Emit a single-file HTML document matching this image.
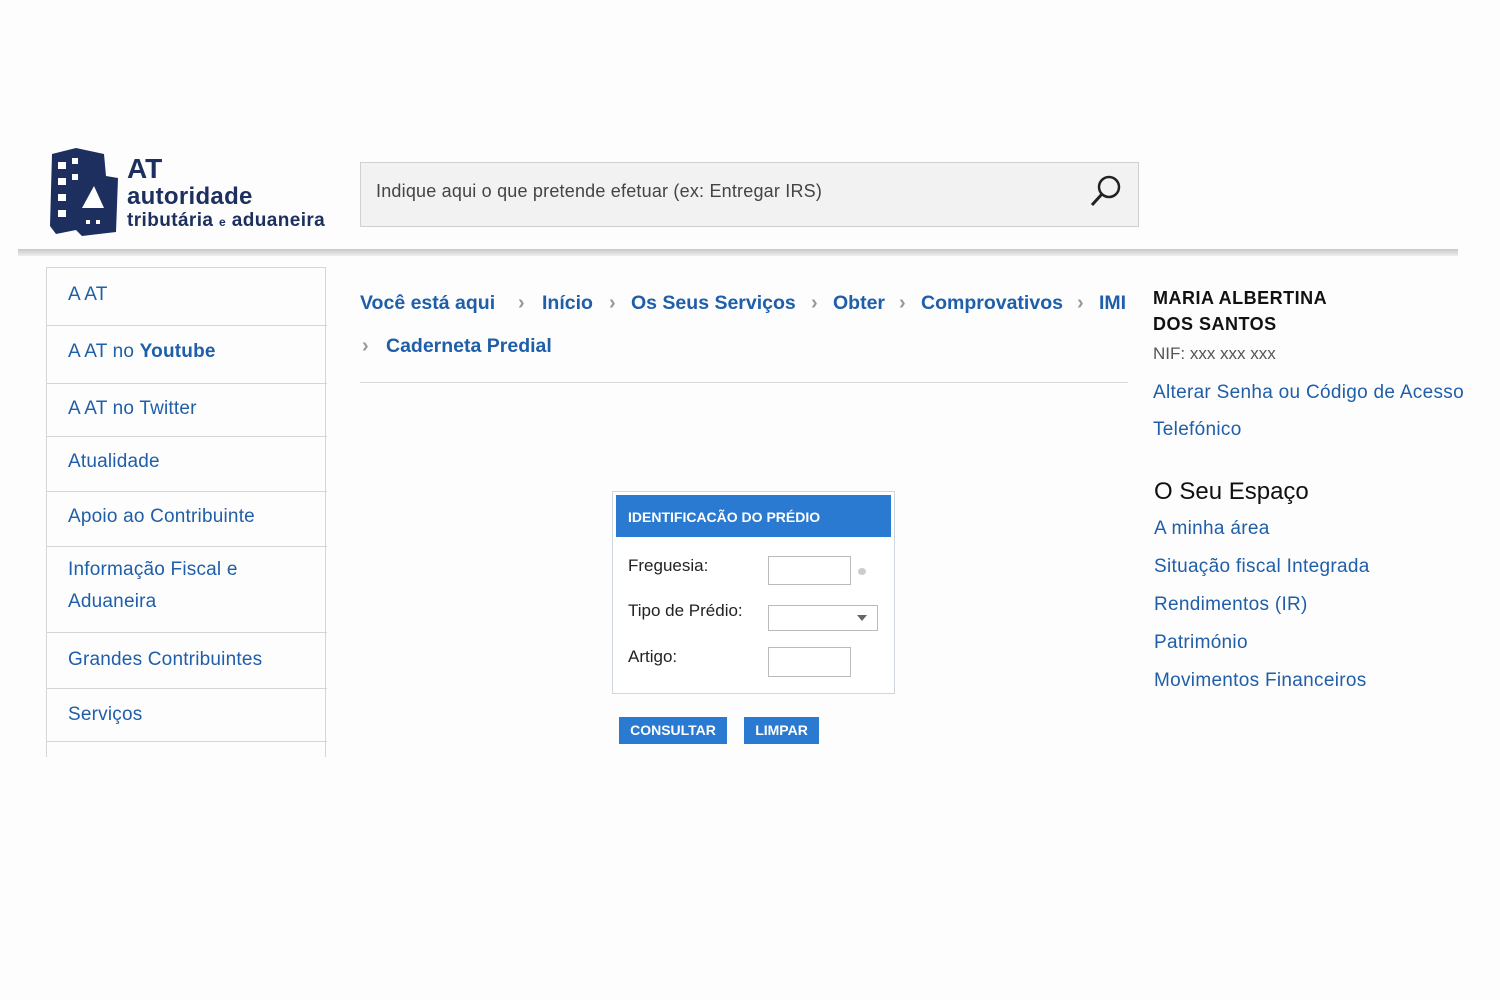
<!DOCTYPE html>
<html><head><meta charset="utf-8"><style>
*{margin:0;padding:0;box-sizing:border-box}
body{width:1500px;height:1000px;background:#fdfdfe;font-family:"Liberation Sans",sans-serif;position:relative;overflow:hidden}
.a{position:absolute}
.nav div{position:absolute;left:0;width:280px;border-bottom:1px solid #d6d6d6;padding-left:21px;font-size:19px;color:#1f5ea8;letter-spacing:0.2px}
.bc{font-weight:bold;font-size:19.5px;color:#1f5ea8;white-space:nowrap;top:292px}
.sep{color:#999;font-size:20px;font-weight:bold;top:292px}
.r{font-size:19px;color:#1f5ea8;left:1154px;letter-spacing:0.3px}
</style></head><body>
<svg class="a" style="left:46px;top:146px" width="76" height="92" viewBox="0 0 76 92">
<path d="M6 8 L30 2 L58 8 L60 30 L72 32 L70 86 L36 90 L30 84 L10 88 L4 80 Z" fill="#1c2f5e"/>
<rect x="12" y="16" width="8" height="7" fill="#fff"/><rect x="12" y="32" width="8" height="7" fill="#fff"/><rect x="12" y="48" width="8" height="7" fill="#fff"/><rect x="12" y="64" width="8" height="7" fill="#fff"/>
<rect x="26" y="12" width="6" height="6" fill="#fff"/><rect x="26" y="28" width="6" height="6" fill="#fff"/>
<path d="M36 62 L48 40 L58 62 Z" fill="#fff"/><rect x="40" y="74" width="4" height="4" fill="#fff"/><rect x="50" y="74" width="4" height="4" fill="#fff"/>
</svg>
<div class="a" style="left:127px;top:154px;color:#1c2f5e;font-weight:bold;font-size:28px;line-height:30px">AT</div>
<div class="a" style="left:127px;top:184px;color:#1c2f5e;font-weight:bold;font-size:24px;line-height:26px;letter-spacing:0.3px">autoridade</div>
<div class="a" style="left:127px;top:210px;color:#1c2f5e;font-weight:bold;font-size:19px;line-height:22px;letter-spacing:0.4px">tributária <span style="font-size:12px">e</span> aduaneira</div>
<div class="a" style="left:360px;top:162px;width:779px;height:65px;background:#f2f2f2;border:1px solid #d0d0d0"></div>
<div class="a" style="left:376px;top:181px;font-size:18px;color:#444;letter-spacing:0.2px">Indique aqui o que pretende efetuar (ex: Entregar IRS)</div>
<svg class="a" style="left:1088px;top:172px" width="38" height="38" viewBox="0 0 38 38"><circle cx="21" cy="15" r="10" fill="none" stroke="#222" stroke-width="2.5"/><line x1="14" y1="22" x2="4" y2="33" stroke="#222" stroke-width="3"/></svg>
<div class="a" style="left:18px;top:249px;width:1440px;height:7px;background:linear-gradient(#c8c8c8,#eee)"></div>
<div class="a nav" style="left:46px;top:267px;width:280px;height:490px;border-left:1px solid #d6d6d6;border-right:1px solid #d6d6d6;border-top:1px solid #d6d6d6">
<div style="top:0;height:58px;padding-top:16px">A AT</div>
<div style="top:58px;height:58px;padding-top:15px">A AT no <b>Youtube</b></div>
<div style="top:116px;height:53px;padding-top:14px">A AT no Twitter</div>
<div style="top:169px;height:55px;padding-top:14px">Atualidade</div>
<div style="top:224px;height:55px;padding-top:14px">Apoio ao Contribuinte</div>
<div style="top:279px;height:86px;line-height:32px;padding-top:7px">Informação Fiscal e<br>Aduaneira</div>
<div style="top:365px;height:56px;padding-top:16px">Grandes Contribuintes</div>
<div style="top:421px;height:53px;padding-top:15px">Serviços</div>
</div>
<div class="a bc" style="left:360px">Você está aqui</div>
<div class="a sep" style="left:518px">›</div>
<div class="a bc" style="left:542px">Início</div>
<div class="a sep" style="left:609px">›</div>
<div class="a bc" style="left:631px">Os Seus Serviços</div>
<div class="a sep" style="left:811px">›</div>
<div class="a bc" style="left:833px">Obter</div>
<div class="a sep" style="left:899px">›</div>
<div class="a bc" style="left:921px">Comprovativos</div>
<div class="a sep" style="left:1077px">›</div>
<div class="a bc" style="left:1099px">IMI</div>
<div class="a sep" style="left:362px;top:335px">›</div>
<div class="a bc" style="left:386px;top:335px">Caderneta Predial</div>
<div class="a" style="left:360px;top:382px;width:768px;height:1px;background:#d8d8d8"></div>
<div class="a" style="left:612px;top:491px;width:283px;height:203px;border:1px solid #d0d6dd;background:#fff"></div>
<div class="a" style="left:616px;top:495px;width:275px;height:42px;background:#2a7ad2;color:#fff;font-weight:bold;font-size:14px;padding:14px 0 0 12px">IDENTIFICACÃO DO PRÉDIO</div>
<div class="a" style="left:628px;top:556px;font-size:17px;color:#222">Freguesia:</div>
<div class="a" style="left:628px;top:601px;font-size:17px;color:#222">Tipo de Prédio:</div>
<div class="a" style="left:628px;top:647px;font-size:17px;color:#222">Artigo:</div>
<div class="a" style="left:768px;top:556px;width:83px;height:29px;border:1px solid #bbb;background:#fff"></div>
<div class="a" style="left:858px;top:568px;width:8px;height:7px;border-radius:50%;background:#ccc"></div>
<div class="a" style="left:768px;top:605px;width:110px;height:26px;border:1px solid #bbb;background:#fff"></div>
<div class="a" style="left:857px;top:615px;width:0;height:0;border-left:5px solid transparent;border-right:5px solid transparent;border-top:6px solid #666"></div>
<div class="a" style="left:768px;top:647px;width:83px;height:30px;border:1px solid #bbb;background:#fff"></div>
<div class="a" style="left:619px;top:717px;width:108px;height:27px;background:#2a7ad2;color:#fff;font-weight:bold;font-size:14px;text-align:center;line-height:27px">CONSULTAR</div>
<div class="a" style="left:744px;top:717px;width:75px;height:27px;background:#2a7ad2;color:#fff;font-weight:bold;font-size:14px;text-align:center;line-height:27px">LIMPAR</div>
<div class="a" style="left:1153px;top:285px;font-weight:bold;font-size:18px;line-height:26px;color:#111;letter-spacing:0.5px">MARIA ALBERTINA<br>DOS SANTOS</div>
<div class="a" style="left:1153px;top:344px;font-size:17px;color:#555">NIF: xxx xxx xxx</div>
<div class="a r" style="left:1153px;top:382px">Alterar Senha ou Código de Acesso</div>
<div class="a r" style="left:1153px;top:419px">Telefónico</div>
<div class="a" style="left:1154px;top:478px;font-size:24px;color:#111">O Seu Espaço</div>
<div class="a r" style="top:518px">A minha área</div>
<div class="a r" style="top:556px">Situação fiscal Integrada</div>
<div class="a r" style="top:594px">Rendimentos (IR)</div>
<div class="a r" style="top:632px">Património</div>
<div class="a r" style="top:670px">Movimentos Financeiros</div>
</body></html>
